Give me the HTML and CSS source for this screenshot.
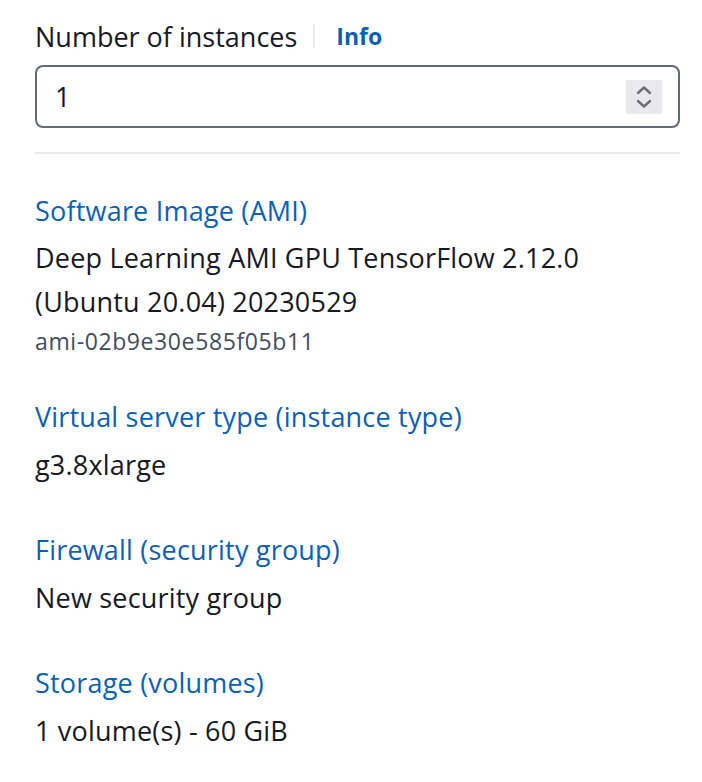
FILE: index.html
```html
<!DOCTYPE html>
<html>
<head>
<meta charset="utf-8">
<link rel="stylesheet" href="styles.css">
</head>
<body>
<div class="panel">
  <div class="field">
    <div class="label-row">
      <span class="label">Number of instances</span>
      <span class="sep"></span>
      <a class="info">Info</a>
    </div>
    <div class="input">
      <span class="value">1</span>
      <span class="spinner">
        <svg width="36" height="34" viewBox="0 0 36 34">
          <path d="M12 13 L18 7.5 L24 13" fill="none" stroke="#6f6b78" stroke-width="2.4" stroke-linecap="round" stroke-linejoin="round"/>
          <path d="M12 21 L18 26.5 L24 21" fill="none" stroke="#6f6b78" stroke-width="2.4" stroke-linecap="round" stroke-linejoin="round"/>
        </svg>
      </span>
    </div>
  </div>
  <hr class="divider">
  <div class="section">
    <div class="heading">Software Image (AMI)</div>
    <div class="text">Deep Learning AMI GPU TensorFlow 2.12.0 (Ubuntu 20.04) 20230529</div>
    <div class="sub">ami-02b9e30e585f05b11</div>
  </div>
  <div class="section">
    <div class="heading">Virtual server type (instance type)</div>
    <div class="text">g3.8xlarge</div>
  </div>
  <div class="section">
    <div class="heading">Firewall (security group)</div>
    <div class="text">New security group</div>
  </div>
  <div class="section">
    <div class="heading">Storage (volumes)</div>
    <div class="text">1 volume(s) - 60 GiB</div>
  </div>
</div>
</body>
</html>
```
FILE: styles.css
```css
html, body {
  margin: 0;
  padding: 0;
  background: #ffffff;
}
body {
  font-family: "Open Sans", "Noto Sans", sans-serif;
  color: #16191f;
}
.panel {
  width: 645px;
  padding: 14px 0 0 35px;
}
.label-row {
  display: flex;
  align-items: center;
  height: 44px;
}
.label {
  font-size: 27px;
  color: #16191f;
}
.sep {
  width: 2px;
  height: 24px;
  background: #e9ebed;
  margin: 0 21px 0 16px;
}
.info {
  font-size: 23px;
  font-weight: 700;
  color: #0b5fb8;
}
.input {
  margin-top: 7px;
  height: 63px;
  box-sizing: border-box;
  border: 2px solid #5f6b7a;
  border-radius: 8px;
  display: flex;
  align-items: center;
  justify-content: space-between;
  padding: 0 16px 0 18px;
}
.value {
  font-size: 27px;
}
.spinner {
  width: 36px;
  height: 34px;
  background: #e9e8ee;
  display: flex;
}
.divider {
  border: none;
  height: 2px;
  background: #e9ebed;
  margin: 24px 0 0 0;
}
.section {
  margin-top: 41px;
}
.divider + .section {
  margin-top: 35px;
}
.heading {
  font-size: 27px;
  letter-spacing: 0.2px;
  line-height: 44px;
  color: #0b5fb8;
  margin-bottom: 4px;
}
.divider + .section .heading {
  margin-bottom: 3px;
}
.text {
  font-size: 27px;
  letter-spacing: 0.2px;
  line-height: 44px;
}
.sub {
  font-size: 23px;
  letter-spacing: 0.6px;
  line-height: 30px;
  margin-top: 2px;
  margin-bottom: -2px;
  color: #414d5c;
}
```
